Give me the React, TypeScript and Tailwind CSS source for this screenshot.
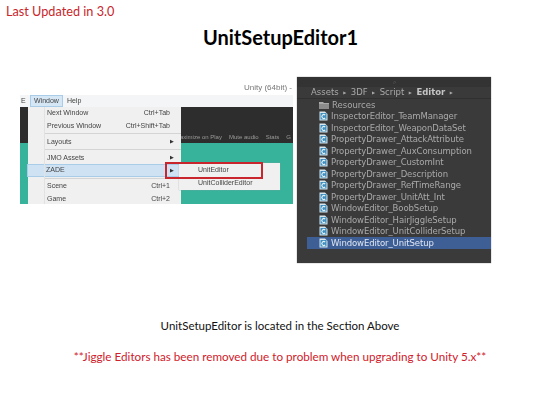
// Slide: UnitSetupEditor1, two editor screenshots rebuilt in HTML
const FILES = [
  'InspectorEditor_TeamManager',
  'InspectorEditor_WeaponDataSet',
  'PropertyDrawer_AttackAttribute',
  'PropertyDrawer_AuxConsumption',
  'PropertyDrawer_CustomInt',
  'PropertyDrawer_Description',
  'PropertyDrawer_RefTimeRange',
  'PropertyDrawer_UnitAtt_Int',
  'WindowEditor_BoobSetup',
  'WindowEditor_HairJiggleSetup',
  'WindowEditor_UnitColliderSetup',
]

function ScriptIcon() {
  return (
    <svg width="9" height="10" viewBox="0 0 9 10" className="shrink-0">
      <path d="M0.5 0.5 H6 L8.5 3 V9.5 H0.5 Z" fill="#d8e6ee" />
      <rect x="1.5" y="2" width="6" height="6.5" fill="#3f8fc0" />
      <path d="M6.2 4 A2 2 0 1 0 6.2 7" fill="none" stroke="#e6f2f8" strokeWidth="1.1" />
    </svg>
  )
}

function FolderIcon() {
  return (
    <svg width="10" height="8" viewBox="0 0 10 8" className="shrink-0">
      <path d="M0 1 H4 L5 2 H10 V8 H0 Z" fill="#a9a9a9" />
      <rect x="0" y="3" width="10" height="5" fill="#8c8c8c" />
    </svg>
  )
}

function FileRow({ name, selected }: { name: string; selected?: boolean }) {
  return (
    <div className={`ml-[10px] flex h-[11.5px] items-center gap-[2px] pl-[12px] ${selected ? 'bg-[#3e5f96] text-[#dfe6f2]' : ''}`}>
      <ScriptIcon />
      <span className="ml-[1px] whitespace-nowrap tracking-[-0.1px]">{name}</span>
    </div>
  )
}

function MenuRow({ label, right, arrow }: { label: string; right?: string; arrow?: boolean }) {
  return (
    <div className="flex h-[12.5px] items-center justify-between pl-[19px] pr-[7px]">
      <span>{label}</span>
      {right && <span className="pr-[4px]">{right}</span>}
      {arrow && <span className="text-[5px] text-[#333]">▶</span>}
    </div>
  )
}

function MenuSeparator() {
  return <div className="my-[1.25px] ml-[17px] h-px bg-[#d4d4d4]" />
}

function UnityMenuShot() {
  return (
    <div className="relative mt-[3px] h-[124px] w-[273px] shrink-0 overflow-hidden bg-white font-['Liberation_Sans',sans-serif] text-[7px] text-[#444] blur-[0.3px]">
      <div className="flex h-[15px] items-center justify-end pr-[1px] text-[8px] text-[#777]">Unity (64bit) -</div>
      <div className="flex h-[12px] items-center bg-[#f4f5f6] text-[7px]">
        <span className="w-[10px] pl-[1px]">E</span>
        <span className="border border-[#a9cde8] bg-[#d5e6f4] px-[3px]">Window</span>
        <span className="px-[4px]">Help</span>
      </div>
      <div className="flex h-[36px] items-end justify-end gap-[7px] bg-[#2d2d2d] pb-[1px] pr-[2px] text-[6px] text-[#9a9a9a]">
        <span>aximize on Play</span>
        <span>Mute audio</span>
        <span>Stats</span>
        <span>G</span>
      </div>
      <div className="h-[61px] bg-[#37b39c]" />

      {/* Dropdown */}
      <div className="absolute left-[8px] top-[27px] h-[97px] w-[153px] bg-[#f0f0f0]">
        <div className="absolute bottom-0 left-[16px] top-0 w-px bg-[#e2e2e2]" />
        <MenuRow label="Next Window" right="Ctrl+Tab" />
        <MenuRow label="Previous Window" right="Ctrl+Shift+Tab" />
        <MenuSeparator />
        <MenuRow label="Layouts" arrow />
        <MenuSeparator />
        <MenuRow label="JMO Assets" arrow />
        <div className="-ml-px bg-[#cfe2f4] outline outline-1 -outline-offset-1 outline-[#a9cde8]">
          <MenuRow label="ZADE" arrow />
        </div>
        <MenuSeparator />
        <MenuRow label="Scene" right="Ctrl+1" />
        <MenuRow label="Game" right="Ctrl+2" />
      </div>

      {/* Submenu */}
      <div className="absolute left-[159px] top-[83px] h-[27px] w-[101px] bg-[#f0f0f0] pl-[19px] pt-[1px] shadow-[0_0_1px_#999]">
        <div className="flex h-[12.5px] items-center">UnitEditor</div>
        <div className="flex h-[12.5px] items-center">UnitColliderEditor</div>
      </div>

      {/* Red highlight */}
      <div className="absolute left-[145px] top-[82px] h-[17px] w-[98px] border-2 border-[#c8262c]" />
    </div>
  )
}

function ProjectPanel() {
  return (
    <div className="flex h-[186px] w-[194px] shrink-0 flex-col bg-[#3a3a3a] font-['DejaVu_Sans',sans-serif] text-[8.5px] leading-none text-[#a9a9a9] shadow-[0_0_1px_#777] blur-[0.3px]">
      <div className="flex h-[10px] items-center justify-center bg-[#333] text-[6px] text-[#666]">⌕</div>
      <div className="flex h-[12px] items-center gap-[4.5px] border-b border-[#303030] pl-[14px] text-[8.5px]">
        <span>Assets</span>
        <span className="text-[4px]">▶</span>
        <span>3DF</span>
        <span className="text-[4px]">▶</span>
        <span>Script</span>
        <span className="text-[4px]">▶</span>
        <span className="font-bold text-[#c4c4c4]">Editor</span>
        <span className="text-[4px]">▶</span>
      </div>
      <div className="ml-[10px] flex h-[11.5px] items-center gap-[3px] pl-[12px]">
        <FolderIcon />
        <span>Resources</span>
      </div>
      {FILES.map((name) => (
        <FileRow key={name} name={name} />
      ))}
      <FileRow name="WindowEditor_UnitSetup" selected />
    </div>
  )
}

export default function App() {
  return (
    <div className="flex h-[420px] w-[560px] flex-col overflow-hidden bg-white font-['Lato','Liberation_Sans',sans-serif]">
      <div className="pl-[6px] pt-[2px] text-[12.7px] leading-[18px] text-[#c8262c]">Last Updated in 3.0</div>
      <h1 className="mt-[3px] pl-[1px] text-center text-[20px] font-bold leading-[28px] text-black">UnitSetupEditor1</h1>
      <div className="mt-[26px] flex items-start gap-[4px] pl-[20px]">
        <UnityMenuShot />
        <ProjectPanel />
      </div>
      <p className="mt-[54px] text-center text-[11.5px] leading-[18px] text-[#111]">UnitSetupEditor is located in the Section Above</p>
      <p className="mt-[12px] text-center text-[11.7px] leading-[18px] text-[#d0202a]">
        **Jiggle Editors has been removed due to problem when upgrading to Unity 5.x**
      </p>
    </div>
  )
}
